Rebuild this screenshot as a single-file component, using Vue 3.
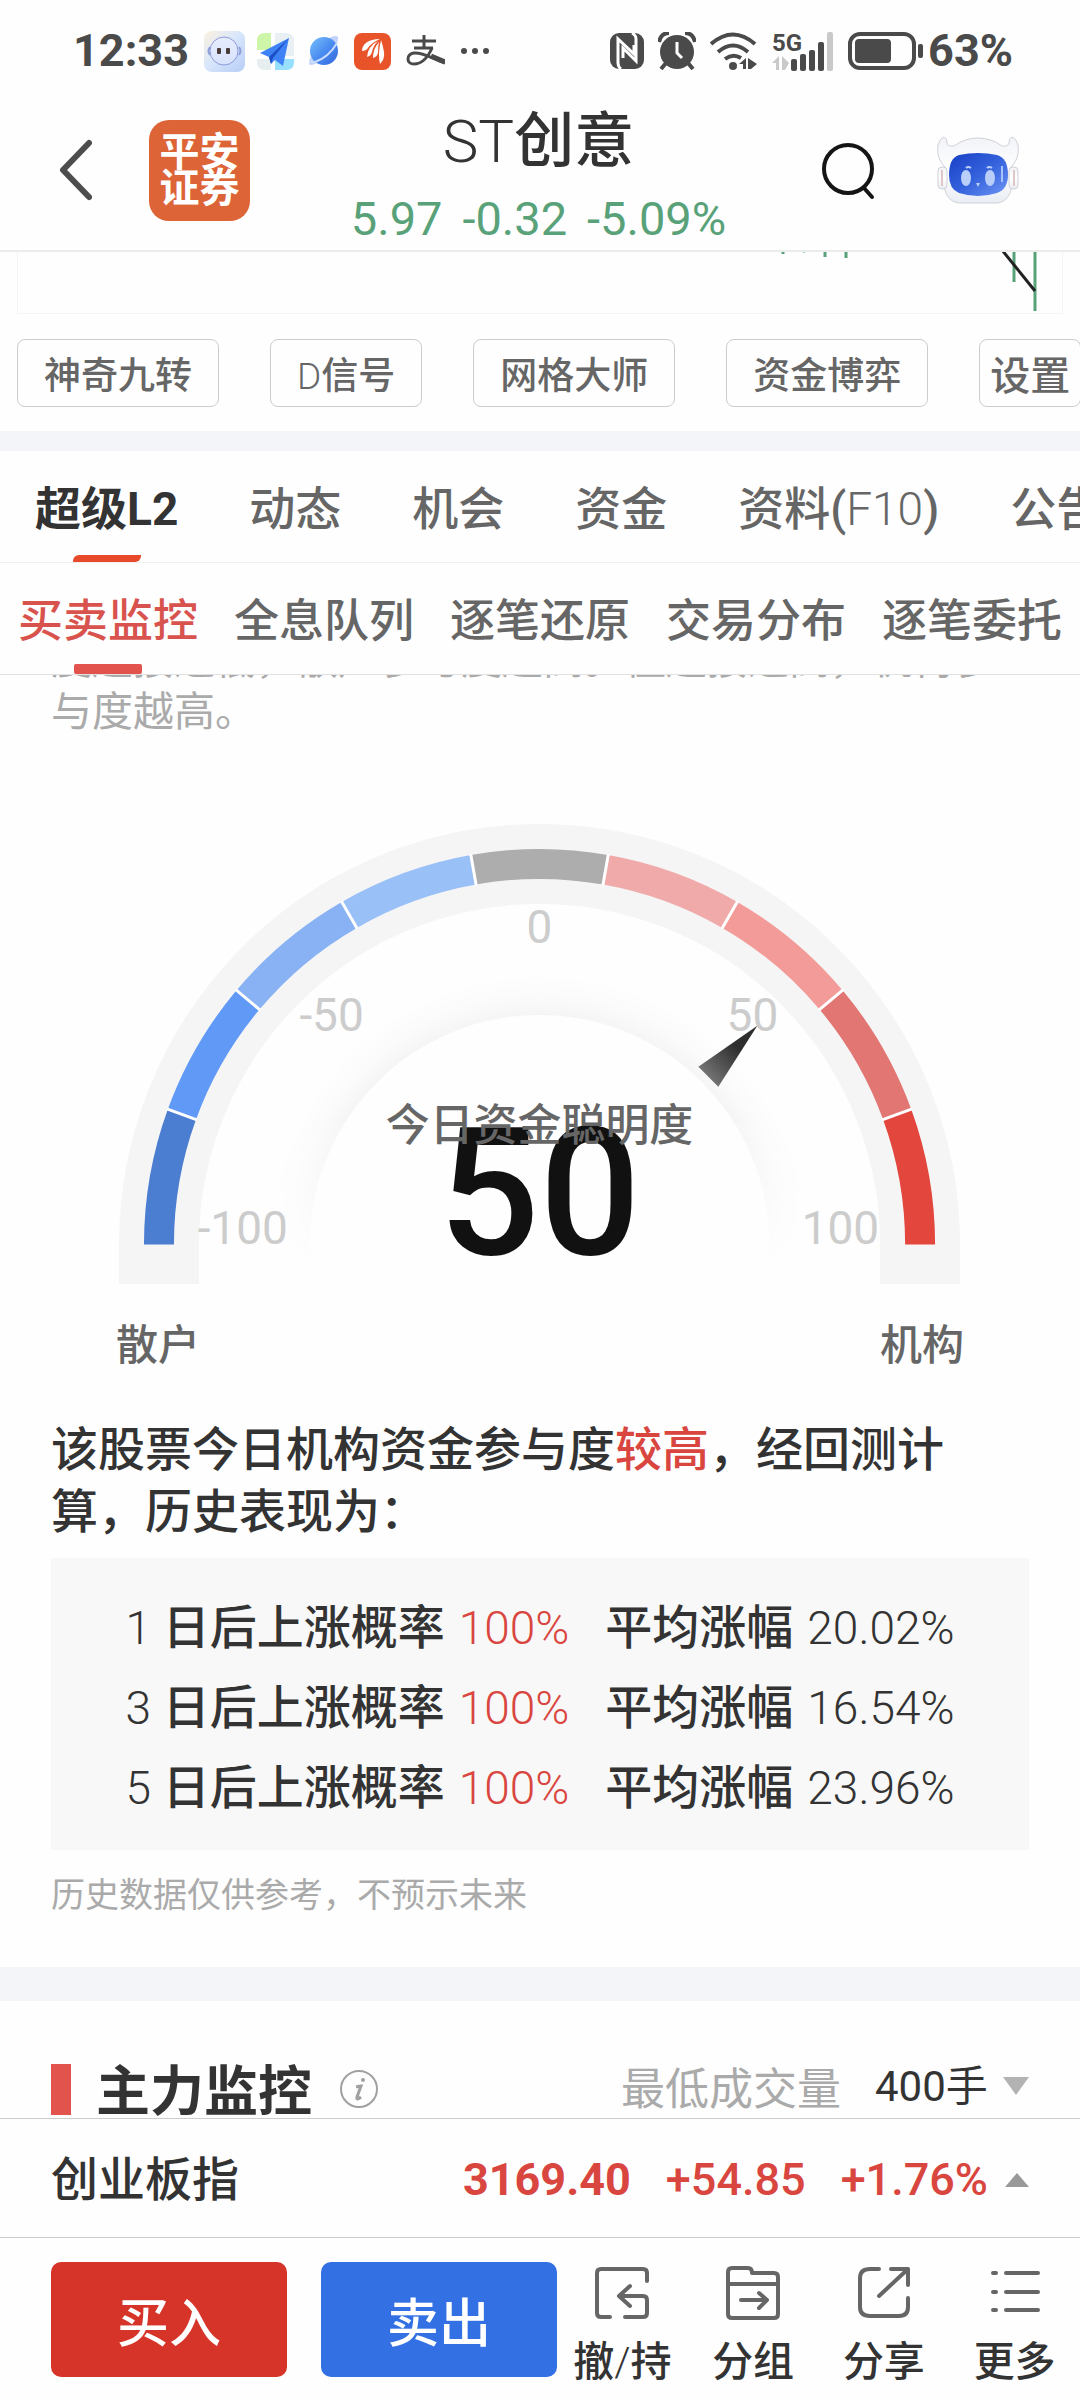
<script setup>
import { ref } from 'vue'

const chips = ['神奇九转', 'D信号', '网格大师', '资金博弈']
const tabs = ['超级L2', '动态', '机会', '资金', '资料(F10)', '公告']
const subTabs = ['买卖监控', '全息队列', '逐笔还原', '交易分布', '逐笔委托']
const history = [
  { day: 1, rate: '100%', gain: '20.02%' },
  { day: 3, rate: '100%', gain: '16.54%' },
  { day: 5, rate: '100%', gain: '23.96%' },
]
const activeTab = ref(0)
const activeSub = ref(0)
const lots = ref('400')

// Latin runs are set in a lighter weight than the Chinese around them
const parts = (text) =>
  text.split(/([A-Z][A-Z0-9]*)/).filter(Boolean).map((s) => ({ s, latin: /^[A-Z]/.test(s) }))

const colors = ['#4b7dd0', '#6199f7', '#88b2f4', '#9ac0f8', '#adadad', '#f0aaa9', '#f29b98', '#e27673', '#e3463d']
const cx = 421
const cy = 421
const point = (r, deg) => {
  const a = (deg * Math.PI) / 180
  return [cx - r * Math.cos(a), cy - r * Math.sin(a)].map((n) => n.toFixed(2)).join(' ')
}
const segments = colors.map((color, i) => ({
  color,
  d: `M${point(381, i * 20)} A381 381 0 0 1 ${point(381, i * 20 + 20)}`,
}))
const gaps = [20, 40, 60, 80, 100, 120, 140, 160].map((deg) => `M${point(365, deg)} L${point(397, deg)}`)
</script>

<template>
  <div class="app">
    <div class="status">
      <span class="clock">12:33</span>
      <svg class="s-bot" width="41" height="41" viewBox="0 0 41 41">
        <defs>
          <linearGradient id="botBg" x1="0" y1="0" x2="1" y2="1">
            <stop offset="0" stop-color="#fdf1e0" /><stop offset=".45" stop-color="#d9e7fa" /><stop offset="1" stop-color="#b7cdf8" />
          </linearGradient>
          <linearGradient id="botFace" x1="0" y1="0" x2="0" y2="1">
            <stop offset="0" stop-color="#e6edfd" /><stop offset="1" stop-color="#d8e2fd" />
          </linearGradient>
        </defs>
        <rect width="41" height="41" rx="8" fill="url(#botBg)" />
        <path d="M6 16q-3 4 0 8M35 16q3 4 0 8" fill="none" stroke="#8f9fd8" stroke-width="2" />
        <circle cx="20" cy="20" r="14" fill="url(#botFace)" stroke="#8e9bd6" stroke-width="1" />
        <rect x="13" y="17" width="4" height="6" rx="1" fill="#4b3b3a" /><rect x="22" y="17" width="4" height="6" rx="1" fill="#4b3b3a" />
      </svg>
      <svg width="37" height="37" viewBox="0 0 37 37">
        <path d="M8 0h6v17H0V8q0-8 8-8z" fill="#cdf6a8" /><path d="M18 0h11q8 0 8 8v15H18z" fill="#e9f0f3" />
        <path d="M0 26h14v11H8q-8 0-8-8z" fill="#e7eef0" /><path d="M18 26h19v3q0 8-8 8H18z" fill="#97e0fd" />
        <path d="M32 5 3 20l9 4 2 7 4-4 8 6z" fill="#3f82f6" /><path d="M32 5 12 24l2 7 2-6z" fill="#1d4fc4" />
      </svg>
      <svg width="30" height="32" viewBox="0 0 30 32">
        <defs><linearGradient id="planet" x1="0" y1="0" x2="1" y2="1"><stop offset="0" stop-color="#79c0fb" /><stop offset=".5" stop-color="#4a8df0" /><stop offset="1" stop-color="#3566dc" /></linearGradient></defs>
        <path d="M22 2q6-2 7 0 1 8-10 18T1 30q-2-2 1-9" fill="#c3d2fa" />
        <circle cx="15" cy="16" r="14" fill="url(#planet)" />
        <path d="M1 24q1 4 5 3 14-5 22-19" fill="none" stroke="#c9dcff" stroke-width="2" />
      </svg>
      <svg width="37" height="37" viewBox="0 0 37 37">
        <rect width="37" height="37" rx="8" fill="#e9532a" />
        <g fill="#fff">
          <path d="M26 6C14 6 8 11 8 18q4 0 6-3 3-5 12-9z" />
          <path d="M24 8q-10 5-11 16 4-1 5-5 1-6 6-11z" />
          <path d="M25 9q-6 7-6 16 4-1 5-5 0-6 1-11z" />
          <path d="M27 7q-2 9-2 15 0 5 1 9 5-5 4-12-1-6-3-12z" />
        </g>
      </svg>
      <svg width="39" height="32" viewBox="0 0 39 32" fill="none" stroke="#4a4a4a" stroke-width="3">
        <path d="M6 6h24M18 0v13M8 13h19" />
        <path d="M26 13c-4 9-10 16-18 16-8 0-8-10 0-11 9-1 17 5 31 10" />
        <path d="M25 21l14 6" stroke-width="5" />
      </svg>
      <svg width="30" height="8" viewBox="0 0 30 8" fill="#4a4a4a"><circle cx="4" cy="4" r="3" /><circle cx="15" cy="4" r="3" /><circle cx="26" cy="4" r="3" /></svg>

      <div class="status-right">
        <svg width="34" height="36" viewBox="0 0 34 36">
          <rect width="34" height="36" rx="9" fill="#4a4a4a" />
          <path d="M11 36q-3-2-3-6V6l16 15V12" fill="none" stroke="#fff" stroke-width="3" />
          <path d="M22 0q4 2 4 6v22L13 15v10" fill="none" stroke="#fff" stroke-width="3" />
        </svg>
        <svg width="38" height="38" viewBox="0 0 38 38">
          <circle cx="19" cy="20" r="17" fill="#4a4a4a" />
          <path d="M1 10Q3 1 11 1M37 10Q35 1 27 1" fill="none" stroke="#4a4a4a" stroke-width="4" />
          <path d="m8 31-5 6M30 31l5 6" stroke="#4a4a4a" stroke-width="4" />
          <path d="M19 10v11l5 5" fill="none" stroke="#fff" stroke-width="3" />
        </svg>
        <svg width="48" height="38" viewBox="0 0 48 38">
          <g fill="none" stroke="#4a4a4a" stroke-width="4"><path d="M1 12q22-19 44 0" /><path d="M8 20q15-13 30 0" /><path d="M15 27q8-6 16-1" /></g>
          <circle cx="23" cy="34" r="4" fill="#4a4a4a" />
          <path d="M29 32l7-6v11h-3v-5zM38 26l9 6-6 5h-3z" fill="#4a4a4a" />
        </svg>
        <svg width="62" height="39" viewBox="0 0 62 39">
          <text class="net" x="0" y="19">5G</text>
          <path d="M0 31l7-7v14H4v-7zM10 24l7 7-4 7h-3z" fill="#c9c9c9" />
          <g fill="#4a4a4a"><rect x="19" y="27" width="6" height="12" rx="2" /><rect x="28" y="22" width="6" height="17" rx="2" /><rect x="37" y="18" width="6" height="21" rx="2" /><rect x="46" y="10" width="6" height="29" rx="2" /></g>
          <rect x="55" y="0" width="6" height="39" rx="2" fill="#c9c9c9" />
        </svg>
        <svg width="76" height="38" viewBox="0 0 76 38">
          <rect x="2" y="2" width="64" height="34" rx="10" fill="none" stroke="#4a4a4a" stroke-width="4" />
          <rect x="7" y="7" width="36" height="24" rx="4" fill="#4a4a4a" /><rect x="70" y="12" width="5" height="14" rx="2" fill="#4a4a4a" />
        </svg>
        <span class="clock">63%</span>
      </div>
    </div>

    <header class="header">
      <div class="side left">
        <button class="plain" aria-label="返回">
          <svg width="34" height="62" viewBox="0 0 34 62" fill="none" stroke="#4d4d4d" stroke-width="6" stroke-linecap="round" stroke-linejoin="round"><path d="M31 4 5 31l26 27" /></svg>
        </button>
        <a href="#" class="logo">平安<br />证券</a>
      </div>
      <div class="quote">
        <h1><span class="thin">ST</span>创意</h1>
        <p><span>5.97</span><span>-0.32</span><span>-5.09%</span></p>
      </div>
      <div class="side right">
        <button class="plain" aria-label="搜索">
          <svg width="54" height="60" viewBox="0 0 54 60" fill="none" stroke="#151515" stroke-width="4" stroke-linecap="round"><circle cx="27" cy="29" r="24" /><path d="m43 48 8 9" /></svg>
        </button>
        <button class="plain" aria-label="智能助手">
          <svg width="82" height="68" viewBox="0 0 82 68">
            <defs>
              <linearGradient id="shell" x1="0" y1="0" x2="0" y2="1"><stop offset="0" stop-color="#f1f3f7" /><stop offset=".5" stop-color="#fff" /><stop offset="1" stop-color="#e9edf4" /></linearGradient>
              <linearGradient id="screen" x1="0" y1="0" x2="1" y2="1"><stop offset="0" stop-color="#173fc4" /><stop offset=".5" stop-color="#3461dc" /><stop offset="1" stop-color="#6f96f5" /></linearGradient>
            </defs>
            <g fill="url(#shell)" stroke="#d0d1d6" stroke-width="1">
              <path d="M8 31C1 24 0 16 1 9q2-7 6-8 3 1 3 6 1 4 7 3Q28 2 41 2t24 8q6 1 7-3 0-5 3-6 4 1 6 8c1 7 0 15-7 22 3 15 2 36-16 36H24C6 67 5 46 8 31z" />
              <rect x="1" y="31" width="9" height="22" rx="4" /><rect x="72" y="31" width="9" height="22" rx="4" />
            </g>
            <path d="M5 34v16M77 34v16" stroke="#dfc7c8" stroke-width="2" />
            <path d="M22 19q19-4 38 0 11 3 11 20 0 14-11 18-19 6-38 0-10-4-10-18 0-17 10-20z" fill="url(#screen)" />
            <ellipse cx="29" cy="42" rx="5" ry="8" fill="#b9cffa" /><ellipse cx="53" cy="42" rx="5" ry="8" fill="#b9cffa" />
            <path d="M29 32q2-2 5 0M50 32q2-2 5 0" stroke="#b9cffa" stroke-width="2" fill="none" />
            <path d="M39 47h4l-2 4z" fill="#b9cffa" /><path d="M65 30v16" stroke="#a9c2f8" stroke-width="2" />
          </svg>
        </button>
      </div>
    </header>

    <div class="chart">
      <svg width="300" height="61" viewBox="0 0 300 61">
        <g stroke="#59a279" stroke-width="3"><path d="M21 0v2M63 0v5M84 0v6M252 0v30M273 0v59" /><path d="M41 0h2" stroke-width="1" /></g>
        <path d="m240-2 33 41" stroke="#222" stroke-width="3" />
      </svg>
    </div>

    <div class="chips">
      <button v-for="c in chips" :key="c" class="chip"><span v-for="p in parts(c)" :key="p.s" :class="{ thin: p.latin }">{{ p.s }}</span></button>
      <button class="chip setting">设置</button>
    </div>
    <div class="band"></div>

    <nav class="tabs">
      <button v-for="(t, i) in tabs" :key="t" :class="{ on: i === activeTab }" @click="activeTab = i"><span v-for="p in parts(t)" :key="p.s" :class="{ thin: p.latin && i !== activeTab }">{{ p.s }}</span></button>
    </nav>
    <nav class="subtabs">
      <button v-for="(t, i) in subTabs" :key="t" :class="{ on: i === activeSub }" @click="activeSub = i">{{ t }}</button>
    </nav>

    <main>
      <section class="smart">
        <p class="intro">度越接近低，散户参与度越高。值越接近高，机构参与度越高。</p>

        <svg class="gauge" viewBox="0 0 842 461">
          <defs>
            <radialGradient id="halo" gradientUnits="userSpaceOnUse" cx="421" cy="421" r="270">
              <stop offset=".85" stop-color="#000" stop-opacity=".035" /><stop offset=".92" stop-color="#000" stop-opacity=".012" /><stop offset="1" stop-color="#000" stop-opacity="0" />
            </radialGradient>
            <linearGradient id="fade" x1="0" y1="0" x2="0" y2="1"><stop offset=".5" stop-color="#fff" /><stop offset="1" stop-color="#000" /></linearGradient>
            <mask id="haloMask"><rect x="140" y="140" width="562" height="300" fill="url(#fade)" /></mask>
            <linearGradient id="needle" gradientUnits="userSpaceOnUse" x1="588" y1="255" x2="620" y2="225"><stop offset="0" stop-color="#777" /><stop offset="1" stop-color="#2e2e2e" /></linearGradient>
          </defs>
          <path d="M40 461v-40a381 381 0 0 1 762 0v40" fill="none" stroke="#f5f5f5" stroke-width="80" />
          <path v-for="s in segments" :key="s.color" :d="s.d" :stroke="s.color" fill="none" stroke-width="30" />
          <path v-for="g in gaps" :key="g" :d="g" stroke="#fff" stroke-width="3" />
          <g mask="url(#haloMask)"><path d="M151 441v-20a270 270 0 0 1 540 0v20h-40v-20a230 230 0 0 0-460 0v20z" fill="url(#halo)" /></g>
          <g class="ticks">
            <text x="421" y="119" text-anchor="middle">0</text>
            <text x="245" y="207" text-anchor="end">-50</text><text x="660" y="207" text-anchor="end">50</text>
            <text x="169" y="420" text-anchor="end">-100</text><text x="761" y="420" text-anchor="end">100</text>
          </g>
          <path d="M639 202 580 243l20 20z" fill="url(#needle)" />
          <text class="score" x="421" y="430" text-anchor="middle">50</text>
          <text class="caption" x="421" y="317" text-anchor="middle">今日资金聪明度</text>
        </svg>
        <div class="ends"><span>散户</span><span>机构</span></div>

        <p class="summary">该股票今日机构资金参与度<em>较高</em>，经回测计算，历史表现为：</p>
        <div class="stats">
          <table>
            <tbody>
              <tr v-for="h in history" :key="h.day">
                <th scope="row"><span class="num">{{ h.day }}</span> 日后上涨概率</th>
                <td class="num rate">{{ h.rate }}</td>
                <td class="label">平均涨幅</td>
                <td class="num">{{ h.gain }}</td>
              </tr>
            </tbody>
          </table>
        </div>
        <p class="note">历史数据仅供参考，不预示未来</p>
      </section>
      <div class="band wide"></div>
      <section class="main-force">
        <h2>主力监控</h2>
        <button class="plain info" aria-label="说明">
          <svg width="40" height="40" viewBox="0 0 40 40" fill="none" stroke="#a0a0a0"><circle cx="20" cy="20" r="18" stroke-width="2" /><circle cx="24" cy="11" r="2" fill="#a0a0a0" stroke="none" /><path d="M17 18q4-1 5-1l-4 11q-1 4 4 0" stroke-width="3" /></svg>
        </button>
        <div class="filter">
          <label for="lots">最低成交量</label>
          <select id="lots" v-model="lots"><option value="400">400手</option></select>
          <svg width="26" height="18" viewBox="0 0 26 18"><path d="M0 0h26L13 18z" fill="#b3b3b3" /></svg>
        </div>
      </section>
    </main>

    <div class="index">
      <span class="name">创业板指</span>
      <b>3169.40</b><span class="chg">+54.85</span><span class="chg">+1.76%</span>
      <svg width="24" height="14" viewBox="0 0 24 14"><path d="M0 14h24L12 0z" fill="#999" /></svg>
    </div>

    <footer class="actions">
      <button class="trade buy">买入</button>
      <button class="trade sell">卖出</button>
      <div class="tools">
        <button class="tool">
          <svg viewBox="0 0 54 56"><path d="M52 15V7q0-4-4-4H6Q2 3 2 7v40q0 4 4 4h9M30 51h18q4 0 4-4V34q0-4-4-4H24M35 20 24 30l11 10" /></svg><span>撤<span class="thin">/</span>持</span>
        </button>
        <button class="tool">
          <svg viewBox="0 0 54 56"><path d="M2 6q0-4 4-4h16q4 0 4 5h22q4 0 4 4v37q0 4-4 4H6q-4 0-4-4zM2 18h50M15 34h24M33 27l8 7-8 8" /></svg>分组
        </button>
        <button class="tool">
          <svg viewBox="0 0 54 56"><path d="M22 3h-9Q3 3 3 12v29q0 9 10 9h29q9 0 9-9V32M34 3h17v16M51 3 22 30" /></svg>分享
        </button>
        <button class="tool">
          <svg viewBox="0 0 54 56"><path d="M5 7h3M18 7h32M5 26h3M18 26h32M5 44h3M18 44h32" /></svg>更多
        </button>
      </div>
    </footer>
  </div>
</template>

<style>
body { margin: 0; background: #fefefe; }
</style>

<style scoped>
.app {
  display: flex; flex-direction: column; height: 100vh; overflow: hidden;
  font-family: Roboto, "Noto Sans CJK SC", sans-serif; font-weight: 500; color: #333; background: #fefefe;
}
.app * { box-sizing: border-box; }
button, select { font: inherit; color: inherit; background: none; border: 0; padding: 0; margin: 0; white-space: nowrap; }
.plain { display: flex; }
.thin { font-weight: 300; }
p, h1, h2 { margin: 0; }
svg { display: block; flex: none; }

.status { display: flex; align-items: center; height: 102px; padding: 0 67px 0 73px; gap: 15px; color: #4a4a4a; flex: none; }
.clock { font-size: 45px; font-weight: 700; line-height: 52px; }
.s-bot { margin-right: -3px; }
.net { font-size: 24px; font-weight: 700; fill: #4a4a4a; }
.status-right { display: flex; align-items: center; gap: 14px; margin-left: auto; }
.status-right .clock { margin-left: -10px; }

.header { display: flex; align-items: center; height: 150px; padding: 0 61px 0 58px; border-bottom: 2px solid #ececec; flex: none; }
.side { flex: 1; display: flex; align-items: center; padding-bottom: 12px; }
.left { gap: 57px; }
.right { justify-content: flex-end; gap: 62px; }
.logo {
  width: 101px; height: 101px; border-radius: 20px; background: #dd6437; color: #fff; text-decoration: none;
  font-size: 40px; font-weight: 700; line-height: 36px; text-align: center; padding-top: 15px;
}
.quote { text-align: center; }
h1 { font-size: 60px; font-weight: 500; line-height: 78px; }
.quote p { display: flex; gap: 20px; justify-content: center; font-size: 47px; line-height: 60px; font-weight: 400; color: #59a279; padding-top: 8px; }

.chart { height: 62px; margin: 0 17px; border: 1px solid #f4f4f4; border-top: 0; display: flex; justify-content: flex-end; flex: none; }
.chips { display: flex; gap: 51px; padding: 25px 0 24px 17px; flex: none; }
.chip { height: 68px; padding: 0 26px; border: 1px solid #ccc; border-radius: 8px; font-size: 37px; color: #666; flex: none; }
.setting { font-size: 40px; padding: 0 10px; }
.band { height: 20px; background: #f3f5f9; flex: none; }
.wide { height: 34px; }

.tabs, .subtabs { display: flex; flex: none; height: 112px; white-space: nowrap; overflow: hidden; color: #666; }
.tabs { gap: 71px; padding-left: 35px; font-size: 46px; border-bottom: 1px solid #f0f0f0; }
.subtabs { gap: 36px; padding-left: 18px; font-size: 45px; border-bottom: 1px solid #e2e2e2; }
.tabs button, .subtabs button { position: relative; flex: none; padding-bottom: 3px; }
.tabs .on { font-weight: 700; color: #333; }
.subtabs .on { color: #d9534e; }
.on::after { content: ""; position: absolute; left: 50%; bottom: 0; width: 68px; height: 10px; margin-left: -34px; background: #e2534e; border-radius: 2px; }
.tabs .on::after { height: 7px; background: #e64a2a; border-radius: 6px 0; }

main { flex: 1; min-height: 0; overflow: hidden; }
.smart { padding: 0 51px 47px; }
.intro { margin-top: -41px; font-size: 41px; line-height: 52px; font-weight: 400; color: #aaa; }
.gauge { width: 86%; margin: 86px auto 0; }
.ticks { font-size: 46px; font-weight: 400; fill: #ccc; }
.score { font-size: 178px; font-weight: 500; fill: #111; }
.caption { font-size: 44px; fill: #666; }
.ends { display: flex; justify-content: space-between; padding: 0 65px; margin-top: 32px; font-size: 42px; line-height: 60px; color: #666; }
.summary { margin-top: 43px; font-size: 47px; line-height: 62px; }
em { font-style: normal; color: #d9463f; }
.stats { margin-top: 15px; padding: 30px 0 22px; background: #f8f8f8; }
table { margin: 0 auto; border-collapse: collapse; font-size: 47px; }
tr { height: 80px; }
th, td { padding: 0; font-weight: 500; line-height: 60px; text-align: left; }
.num { font-size: 46px; font-weight: 300; }
td.num { padding-left: 14px; }
.rate { color: #d9463f; }
.label { padding-left: 36px; }
.note { margin-top: 20px; font-size: 34px; line-height: 50px; font-weight: 400; color: #aaa; }
.main-force { display: flex; align-items: center; height: 116px; padding: 60px 51px 0; }
h2 { align-self: flex-start; font-size: 54px; line-height: 64px; font-weight: 700; display: flex; align-items: flex-start; gap: 25px; }
h2::before { content: ""; width: 20px; height: 51px; margin-top: 3px; background: #e2534e; }
.info { margin-left: 27px; }
.filter { display: flex; align-items: center; margin-left: auto; padding-bottom: 6px; }
label { font-size: 44px; font-weight: 400; color: #aaa; }
select { appearance: none; font-size: 42px; font-weight: 400; margin: 0 15px 0 34px; }

.index { display: flex; align-items: center; height: 120px; padding: 3px 51px 0; border: solid #ccc; border-width: 1px 0; flex: none; color: #d9463f; font-size: 45px; line-height: 115px; }
.index .name { color: #333; font-size: 47px; margin-right: auto; }
.index b { font-weight: 700; }
.chg { margin-left: 35px; }
.index svg { margin-left: 17px; }
.actions { display: flex; align-items: center; gap: 34px; height: 162px; padding-left: 51px; flex: none; }
.trade { width: 236px; height: 115px; border-radius: 10px; color: #fff; font-size: 52px; flex: none; }
.buy { background: #d63429; }
.sell { background: #3270e3; }
.tools { flex: 1; display: flex; margin-left: -34px; padding-top: 20px; }
.tool { flex: 1; display: flex; flex-direction: column; align-items: center; gap: 10px; font-size: 41px; line-height: 60px; }
.tool svg { width: 54px; height: 56px; fill: none; stroke: #666; stroke-width: 4; stroke-linecap: round; stroke-linejoin: round; }
</style>
